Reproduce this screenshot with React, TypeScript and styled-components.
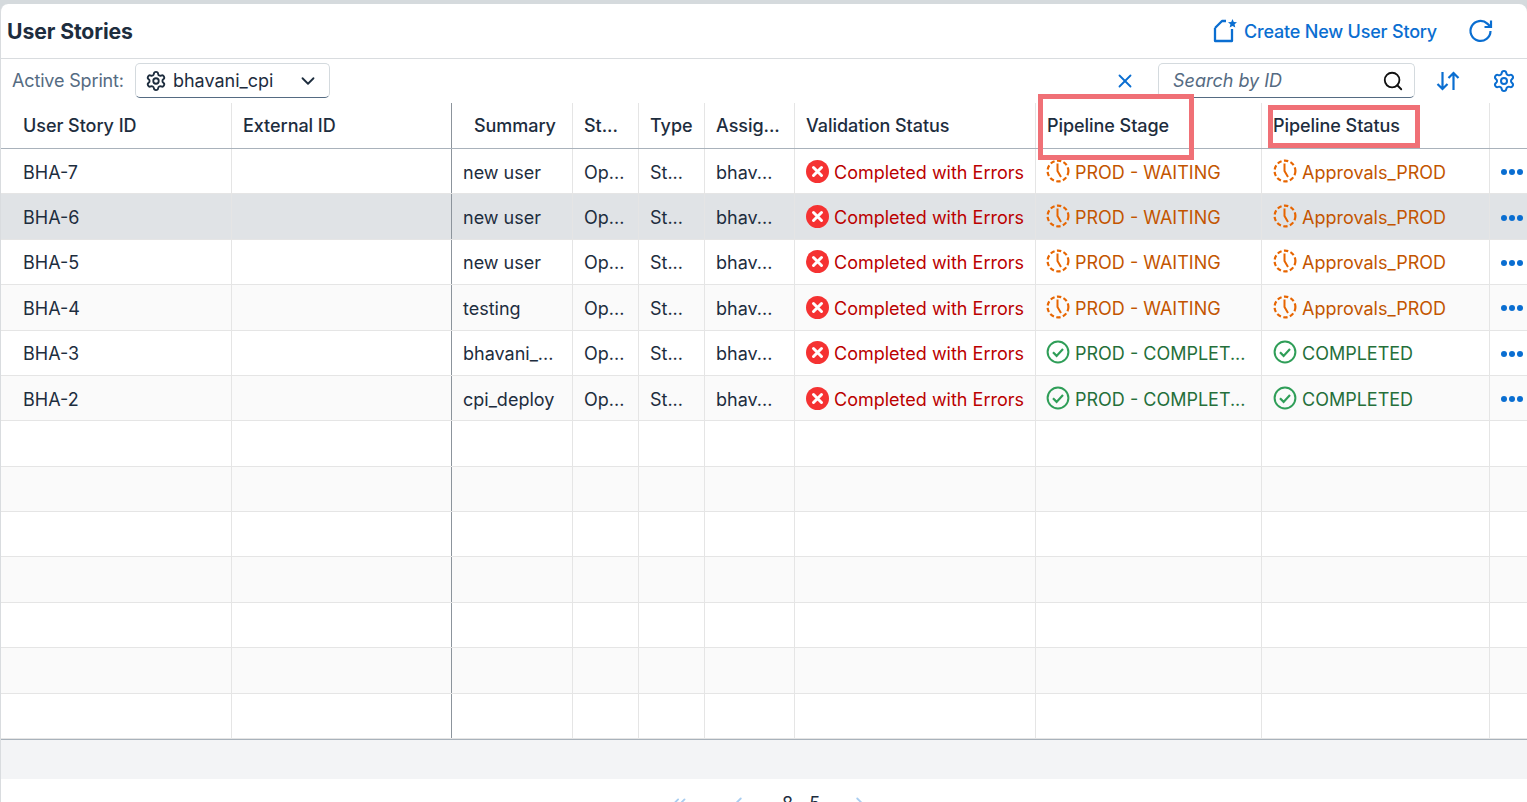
import { createGlobalStyle, styled } from 'styled-components';
import { ChevronDown, ChevronLeft, ChevronRight, ChevronsLeft, Search, Settings, X } from 'lucide-react';

const GlobalStyle = createGlobalStyle`
  html, body {
    margin: 0;
    height: 802px;
    overflow: hidden;
    background: #d5dadd;
    font-family: Inter, "Noto Sans", "Liberation Sans", sans-serif;
    color: #1d2d3e;
  }
`;

const columns = '231px 220px 121px 66px 66px 90px 241px 226px 228px 38px';

const Page = styled.div`
  position: relative;
  margin-top: 4px;
  height: 798px;
  background: #fff;
  border-left: 1px solid #d9dcdf;
  border-radius: 8px 8px 0 0;
  overflow: hidden;
`;

const TitleBar = styled.header`
  height: 55px;
  box-sizing: border-box;
  display: flex;
  align-items: center;
  padding: 0 33px 0 6px;
  border-bottom: 1px solid #d9dcdf;
`;

const Title = styled.h1`
  margin: 0;
  flex: 1;
  font-size: 21.2px;
  font-weight: 700;
  letter-spacing: -0.1px;
`;

const CreateLink = styled.a`
  display: flex;
  align-items: center;
  gap: 7px;
  font-size: 18px;
  font-weight: 500;
  letter-spacing: -0.2px;
  color: #0a6ed1;
`;

const RefreshButton = styled.span`
  display: flex;
  margin-left: 31px;
  color: #0a6ed1;
`;

const FilterBar = styled.div`
  height: 44px;
  box-sizing: border-box;
  display: flex;
  align-items: center;
  padding: 0 11px 1px;
`;

const FilterLabel = styled.span`
  font-size: 18px;
  letter-spacing: -0.15px;
  color: #556b82;
  margin-right: 11px;
`;

const Select = styled.div`
  width: 195px;
  height: 35px;
  box-sizing: border-box;
  display: flex;
  align-items: center;
  padding: 0 10px 0 9px;
  gap: 6px;
  border: 1px solid #d4dade;
  border-bottom-color: #556b82;
  border-radius: 5px;
  font-size: 18px;
`;

const SelectValue = styled.span`
  flex: 1;
`;

const Spacer = styled.div`
  flex: 1;
`;

const ClearButton = styled.span`
  display: flex;
  color: #0a6ed1;
  margin-right: 22px;
`;

const SearchBox = styled.div`
  width: 257px;
  height: 35px;
  box-sizing: border-box;
  display: flex;
  align-items: center;
  justify-content: space-between;
  padding: 0 10px 0 14px;
  border: 1px solid #d4dade;
  border-bottom-color: #556b82;
  border-radius: 5px;
  font-size: 18px;
  font-style: italic;
  color: #556b82;
`;

const ToolIcon = styled.span<{ $gap: number }>`
  display: flex;
  margin-left: ${(p) => p.$gap}px;
  color: #0a6ed1;
`;

const Table = styled.div`
  height: 637px;
  border-bottom: 1px solid #a9b2bb;
  box-sizing: border-box;
`;

const HeaderRow = styled.div`
  display: grid;
  grid-template-columns: ${columns};
  height: 46px;
  box-sizing: border-box;
  border-bottom: 1px solid #a9b2bb;
`;

const Row = styled.div<{ $bg: string }>`
  display: grid;
  grid-template-columns: ${columns};
  height: 45.38px;
  box-sizing: border-box;
  border-bottom: 1px solid #e5e5e5;
  background: ${(p) => p.$bg};
`;

const HeaderCell = styled.div<{ $pad?: number; $fixed?: boolean }>`
  display: flex;
  align-items: center;
  padding-left: ${(p) => p.$pad ?? 11}px;
  border-right: 1px solid ${(p) => (p.$fixed ? '#8c949c' : '#e5e5e5')};
  font-size: 18px;
  font-weight: 500;
  letter-spacing: -0.05px;
  white-space: nowrap;
`;

const Cell = styled.div<{ $pad?: number; $fixed?: boolean; $color?: string }>`
  display: flex;
  align-items: center;
  gap: 5px;
  min-width: 0;
  padding: 2px 0 0 ${(p) => p.$pad ?? 11}px;
  border-right: 1px solid ${(p) => (p.$fixed ? '#8c949c' : '#e5e5e5')};
  font-size: 18px;
  color: ${(p) => p.$color ?? '#1d2d3e'};
  white-space: nowrap;
`;

const Dots = styled.span`
  display: flex;
  gap: 2px;
`;

const Dot = styled.i`
  width: 6px;
  height: 6px;
  border-radius: 50%;
  background: #0a6ed1;
`;

const SummaryBand = styled.div`
  height: 39px;
  background: #f3f4f6;
`;

const Pager = styled.div`
  display: flex;
  padding: 14px 0 0 667px;
  color: #a9cdf0;
  font-size: 18px;
`;

const PagerIcon = styled.span<{ $gap: number }>`
  display: flex;
  margin-left: ${(p) => p.$gap}px;
`;

const PagerText = styled.span<{ $gap: number }>`
  margin-left: ${(p) => p.$gap}px;
  color: #1d2d3e;
  line-height: 22px;
`;

const Marker = styled.div<{ $x: number; $y: number; $w: number; $h: number }>`
  position: absolute;
  left: ${(p) => p.$x - 1}px;
  top: ${(p) => p.$y - 4}px;
  width: ${(p) => p.$w}px;
  height: ${(p) => p.$h}px;
  box-sizing: border-box;
  border: 5px solid #f07076;
`;

function CreateIcon() {
  return (
    <svg width="24" height="24" viewBox="0 0 24 24" fill="none" stroke="currentColor" strokeWidth="2.3">
      <path d="M2 9 9 2h4M2 9v13h17V10" strokeLinejoin="round" />
      <path
        d="m19.5 0 1.3 2.9 3.2.3-2.4 2.1.7 3.2-2.8-1.6-2.8 1.6.7-3.2-2.4-2.1 3.2-.3Z"
        fill="currentColor"
        stroke="none"
      />
    </svg>
  );
}

function RefreshIcon() {
  return (
    <svg width="26" height="26" viewBox="0 0 26 26" fill="none" stroke="currentColor" strokeWidth="2.2">
      <path d="M22.5 13a10 10 0 1 1-3.2-7.4L23 9" />
      <path d="M23 2.5V9h-6.5" />
    </svg>
  );
}

function SortIcon() {
  return (
    <svg width="26" height="24" viewBox="0 0 26 24" fill="none" stroke="currentColor" strokeWidth="2.2">
      <path d="M7.5 3v17M2.5 15l5 5 5-5" />
      <path d="M18.5 21V4M13.5 9l5-5 5 5" />
    </svg>
  );
}

function ErrorIcon() {
  return (
    <svg width="23" height="23" viewBox="0 0 23 23" style={{ flex: 'none', marginTop: -2 }}>
      <circle cx="11.5" cy="11.5" r="11.5" fill="#f53232" />
      <path d="m7.5 7.5 8 8M15.5 7.5l-8 8" stroke="#fff" strokeWidth="3" strokeLinecap="round" />
    </svg>
  );
}

function WaitingIcon() {
  return (
    <svg width="24" height="24" viewBox="0 0 24 24" fill="none" stroke="#e76500" style={{ flex: 'none', marginTop: -3 }}>
      <circle cx="12" cy="12" r="10.4" strokeWidth="2.2" strokeDasharray="4.4 2.4" />
      <path d="M11.5 4.5V12l3.5 6" strokeWidth="2" />
    </svg>
  );
}

function DoneIcon() {
  return (
    <svg width="24" height="24" viewBox="0 0 24 24" fill="none" stroke="#2f9e58" style={{ flex: 'none', marginTop: -3 }}>
      <circle cx="12" cy="12" r="10.4" strokeWidth="2" />
      <path d="m7 12.3 3.6 3.6 6.4-6.8" strokeWidth="2.2" />
    </svg>
  );
}

const WAITING = '#c35500';
const DONE = '#256f3a';
const ERROR = '#bb0000';

const stories = [
  { id: 'BHA-7', summary: 'new user', waiting: true, bg: '#fff' },
  { id: 'BHA-6', summary: 'new user', waiting: true, bg: '#e0e3e6' },
  { id: 'BHA-5', summary: 'new user', waiting: true, bg: '#fff' },
  { id: 'BHA-4', summary: 'testing', waiting: true, bg: '#fafafa' },
  { id: 'BHA-3', summary: 'bhavani_...', waiting: false, bg: '#fff' },
  { id: 'BHA-2', summary: 'cpi_deploy', waiting: false, bg: '#fafafa' },
];

const emptyRows = ['#fff', '#fafafa', '#fff', '#fafafa', '#fff', '#fafafa', '#fff'];

const headers = ['Summary', 'St...', 'Type', 'Assig...', 'Validation Status', 'Pipeline Stage', 'Pipeline Status'];

function EmptyCells() {
  return (
    <>
      <Cell />
      <Cell $fixed />
      <Cell />
      <Cell />
      <Cell />
      <Cell />
      <Cell />
      <Cell />
      <Cell />
      <Cell />
    </>
  );
}

export default function App() {
  return (
    <>
      <GlobalStyle />
      <Page>
        <TitleBar>
          <Title>User Stories</Title>
          <CreateLink>
            <CreateIcon />
            Create New User Story
          </CreateLink>
          <RefreshButton>
            <RefreshIcon />
          </RefreshButton>
        </TitleBar>
        <FilterBar>
          <FilterLabel>Active Sprint:</FilterLabel>
          <Select>
            <Settings size={22} />
            <SelectValue>bhavani_cpi</SelectValue>
            <ChevronDown size={22} />
          </Select>
          <Spacer />
          <ClearButton>
            <X size={22} />
          </ClearButton>
          <SearchBox>
            Search by ID
            <Search size={22} color="#111" />
          </SearchBox>
          <ToolIcon $gap={20}>
            <SortIcon />
          </ToolIcon>
          <ToolIcon $gap={31}>
            <Settings size={24} />
          </ToolIcon>
        </FilterBar>
        <Table>
          <HeaderRow>
            <HeaderCell $pad={22}>User Story ID</HeaderCell>
            <HeaderCell $fixed>External ID</HeaderCell>
            {headers.map((h) => (
              <HeaderCell key={h} $pad={h === 'Summary' ? 22 : 11}>
                {h}
              </HeaderCell>
            ))}
            <HeaderCell />
          </HeaderRow>
          {stories.map((s) => (
            <Row key={s.id} $bg={s.bg}>
              <Cell $pad={22}>{s.id}</Cell>
              <Cell $fixed />
              <Cell>{s.summary}</Cell>
              <Cell>Op...</Cell>
              <Cell>St...</Cell>
              <Cell>bhav...</Cell>
              <Cell $color={ERROR}>
                <ErrorIcon />
                Completed with Errors
              </Cell>
              {s.waiting ? (
                <Cell $color={WAITING} $pad={10}>
                  <WaitingIcon />
                  PROD - WAITING
                </Cell>
              ) : (
                <Cell $color={DONE} $pad={10}>
                  <DoneIcon />
                  PROD - COMPLET...
                </Cell>
              )}
              {s.waiting ? (
                <Cell $color={WAITING}>
                  <WaitingIcon />
                  Approvals_PROD
                </Cell>
              ) : (
                <Cell $color={DONE}>
                  <DoneIcon />
                  COMPLETED
                </Cell>
              )}
              <Cell>
                <Dots>
                  <Dot />
                  <Dot />
                  <Dot />
                </Dots>
              </Cell>
            </Row>
          ))}
          {emptyRows.map((bg, i) => (
            <Row key={i} $bg={bg}>
              <EmptyCells />
            </Row>
          ))}
        </Table>
        <SummaryBand />
        <Pager>
          <PagerIcon $gap={0}>
            <ChevronsLeft size={22} />
          </PagerIcon>
          <PagerIcon $gap={37}>
            <ChevronLeft size={22} />
          </PagerIcon>
          <PagerText $gap={33}>8</PagerText>
          <PagerText $gap={16}>5</PagerText>
          <PagerIcon $gap={29}>
            <ChevronRight size={22} />
          </PagerIcon>
        </Pager>
        <Marker $x={1038} $y={94} $w={156} $h={66} />
        <Marker $x={1268} $y={105} $w={152} $h={43} />
      </Page>
    </>
  );
}
